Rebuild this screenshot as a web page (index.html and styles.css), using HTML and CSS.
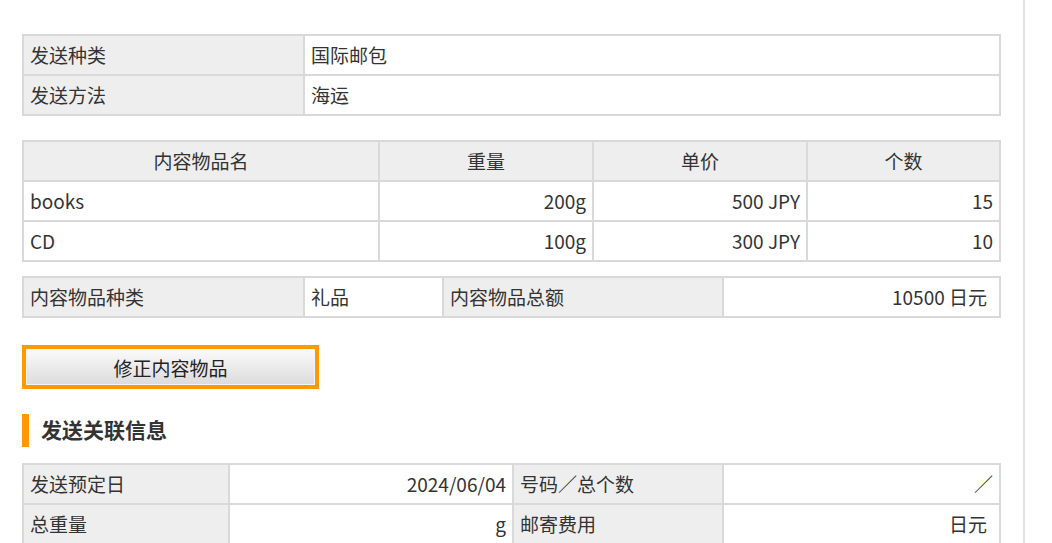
FILE: index.html
```html
<!DOCTYPE html>
<html lang="zh-CN">
<head>
<meta charset="utf-8">
<link rel="stylesheet" href="styles.css">
</head>
<body>
<div class="page">
  <div class="content">
    <table class="tbl t-send">
      <colgroup><col class="c1"><col></colgroup>
      <tr><th class="lbl">发送种类</th><td>国际邮包</td></tr>
      <tr><th class="lbl">发送方法</th><td>海运</td></tr>
    </table>

    <table class="tbl t-items">
      <colgroup><col class="c1"><col class="c2"><col class="c3"><col></colgroup>
      <tr class="head"><th>内容物品名</th><th>重量</th><th>单价</th><th>个数</th></tr>
      <tr><td>books</td><td class="r">200g</td><td class="r">500 JPY</td><td class="r">15</td></tr>
      <tr><td>CD</td><td class="r">100g</td><td class="r">300 JPY</td><td class="r">10</td></tr>
    </table>

    <table class="tbl t-kind">
      <colgroup><col class="c1"><col class="c2"><col class="c3"><col></colgroup>
      <tr><th class="lbl">内容物品种类</th><td>礼品</td><th class="lbl">内容物品总额</th><td class="r pr">10500 日元</td></tr>
    </table>

    <button class="btn" type="button"><span>修正内容物品</span></button>

    <h2 class="sec">发送关联信息</h2>

    <table class="tbl t-info">
      <colgroup><col class="c1"><col class="c2"><col class="c3"><col></colgroup>
      <tr><th class="lbl">发送预定日</th><td class="r">2024/06/04</td><th class="lbl">号码／总个数</th><td class="r">／</td></tr>
      <tr><th class="lbl">总重量</th><td class="r">g</td><th class="lbl">邮寄费用</th><td class="r pr">日元</td></tr>
    </table>
  </div>
</div>
</body>
</html>
```

FILE: styles.css
```css
html, body {
  margin: 0;
  padding: 0;
  background: #ffffff;
}

body {
  font-family: "Noto Sans CJK SC", "Noto Sans", sans-serif;
  font-size: 19px;
  color: #333333;
}

.page {
  width: 1025px;
  min-height: 543px;
  border-right: 2px solid #e3e3e3;
  box-sizing: border-box;
}

.content {
  padding: 34px 0 0 22px;
  width: 979px;
  display: flex;
  flex-direction: column;
  align-items: flex-start;
}

.tbl {
  width: 979px;
  border-collapse: collapse;
  table-layout: fixed;
  border: 2px solid #d9d9d9;
}

.tbl th,
.tbl td {
  border: 2px solid #d9d9d9;
  height: 38px;
  padding: 0 6px;
  font-weight: normal;
  text-align: left;
  line-height: 38px;
  white-space: nowrap;
  overflow: hidden;
}

.tbl th.lbl,
.tbl tr.head th {
  background: #eeeeee;
}

.tbl tr.head th {
  text-align: center;
}

.tbl td.r {
  text-align: right;
}

.tbl td.pr {
  padding-right: 12px;
}

.t-send .c1 { width: 281px; }

.t-items { margin-top: 24px; }
.t-items .c1 { width: 356px; }
.t-items .c2 { width: 214px; }
.t-items .c3 { width: 214px; }

.t-kind { margin-top: 14px; }
.t-kind .c1 { width: 281px; }
.t-kind .c2 { width: 139px; }
.t-kind .c3 { width: 280px; }

.t-info .c1 { width: 206px; }
.t-info .c2 { width: 284px; }
.t-info .c3 { width: 210px; }

.btn {
  margin-top: 27px;
  width: 297px;
  height: 44px;
  padding: 0;
  border: 4px solid #ff9900;
  background: #ff9900;
  cursor: pointer;
  font-family: inherit;
  font-size: 19px;
  color: #222222;
  display: flex;
}

.btn span {
  flex: 1;
  display: flex;
  align-items: center;
  justify-content: center;
  border: 1px solid #f4f4f4;
  background: linear-gradient(#fafafa, #dcdcdc);
}

.sec {
  margin: 25px 0 16px 0;
  height: 33px;
  border-left: 7px solid #ff9900;
  padding-left: 12px;
  font-size: 21px;
  font-weight: bold;
  line-height: 31px;
  color: #333333;
}
```
